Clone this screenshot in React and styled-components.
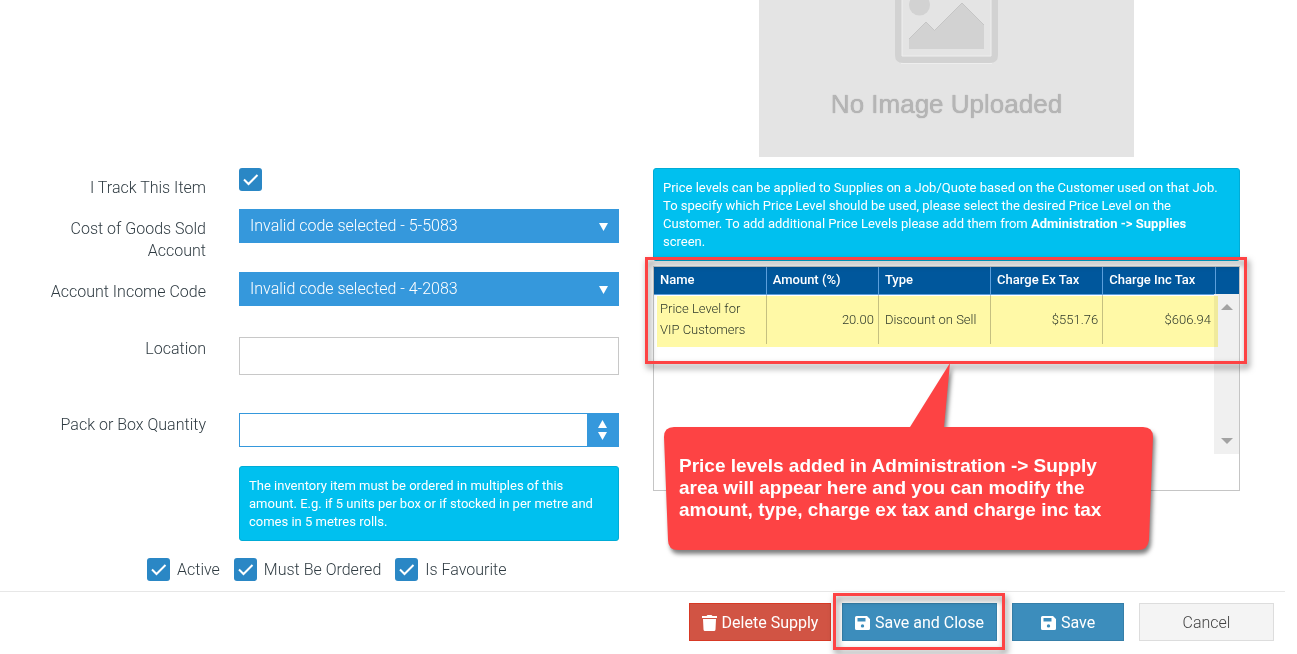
import styled, { createGlobalStyle, css } from 'styled-components'

const GlobalStyle = createGlobalStyle`
  * {
    box-sizing: border-box;
  }
  body {
    margin: 0;
    background: #fff;
    color: #2f3b42;
    font-family: Roboto, "Liberation Sans", sans-serif;
    font-size: 16px;
    font-weight: 300;
    line-height: 22px;
  }
  button, input, select {
    font: inherit;
  }
`
const Main = styled.main`
  display: grid;
  grid-template-columns: minmax(0, 619fr) minmax(0, 587fr);
  column-gap: 34px;
  padding: 0 57px 10px 0;
`
const FormColumn = styled.div`
  padding-top: 168px;
`
const Row = styled.div`
  display: grid;
  grid-template-columns: minmax(0, 206fr) minmax(0, 380fr);
  column-gap: 33px;
  margin-bottom: ${({ $space }) => $space ?? 10}px;
`
const Label = styled.label`
  padding: 9px 0 0 40px;
  text-align: right;
`
const Control = styled.div`
  padding-top: ${({ $low }) => ($low ? 8 : 0)}px;
`
const CheckWrap = styled.span`
  position: relative;
  display: block;
  width: 23px;
  height: 23px;
  svg {
    position: absolute;
    inset: 0;
    pointer-events: none;
  }
`
const CheckInput = styled.input`
  appearance: none;
  display: block;
  width: 23px;
  height: 23px;
  margin: 0;
  border-radius: 3px;
  background: #2a87c5;
`
const SelectWrap = styled.div`
  position: relative;
  svg {
    position: absolute;
    right: 11px;
    top: 14px;
    pointer-events: none;
  }
`
const Select = styled.select`
  appearance: none;
  display: block;
  width: 100%;
  height: 34px;
  padding: 0 30px 0 11px;
  border: 0;
  border-radius: 0;
  background: #3598dc;
  color: #fff;
`
const TextInput = styled.input`
  display: block;
  width: 100%;
  height: 38px;
  padding: 0 10px;
  border: 1px solid #c8c8c8;
`
const NumberBox = styled.div`
  display: flex;
  height: 34px;
  border: 1px solid #3598dc;
`
const NumberInput = styled.input`
  flex: 1;
  min-width: 0;
  padding: 0 10px;
  border: 0;
`
const Spinner = styled.div`
  display: flex;
  flex-direction: column;
  width: 31px;
  background: #3598dc;
`
const SpinButton = styled.button`
  display: flex;
  flex: 1;
  align-items: ${({ $down }) => ($down ? 'flex-start' : 'flex-end')};
  justify-content: center;
  padding: 2px 0;
  border: 0;
  background: none;
`
const Info = styled.p`
  margin: 0;
  padding: 10px 9px 9px;
  border: 1px solid #00acd6;
  border-radius: 3px;
  background: #00c0ef;
  color: #fff;
  font-size: 13px;
  font-weight: 400;
  line-height: 18px;
  white-space: nowrap;
`
const Flags = styled.div`
  display: flex;
  gap: 14px;
  margin: 17px 0 0 147px;
  line-height: 23px;
`
const Flag = styled.label`
  display: flex;
  gap: 7px;
`

const PriceColumn = styled.div`
  position: relative;
`
const ImageBox = styled.div`
  display: flex;
  flex-direction: column;
  align-items: center;
  width: 375px;
  max-width: 100%;
  height: 157px;
  margin: 0 auto 11px;
  background: #e4e4e4;
  color: #b5b5b5;
  font-family: "Liberation Sans", Arial, sans-serif;
  font-size: 26px;
  font-weight: 400;
  line-height: 30px;
  text-shadow: 0 0 1px #999;
  svg {
    margin-bottom: 24px;
  }
`
const Grid = styled.div`
  position: relative;
  height: 225px;
  margin-top: 5px;
  border: 1px solid #c5c5c5;
`
const Table = styled.table`
  width: 100%;
  border-collapse: collapse;
  table-layout: fixed;
  font-size: 13px;
`
const Th = styled.th`
  height: 27px;
  padding: 0 6px;
  border-right: 1px solid #5c9fdc;
  border-bottom: 1px solid #5c9fdc;
  background: #00579c;
  color: #fff;
  font-weight: 500;
  line-height: 20px;
  text-align: left;
  white-space: nowrap;
  &:last-child {
    width: 24px;
    border-right: 0;
  }
`
const Td = styled.td`
  height: 50px;
  padding: 0 4px 0 6px;
  border-right: 1px solid #c5c5c5;
  line-height: 21px;
  text-align: ${({ $number }) => ($number ? 'right' : 'left')};
  &:nth-last-child(-n + 2) {
    border-right: 0;
  }
`
const ScrollTrack = styled.div`
  position: absolute;
  top: 27px;
  right: 0;
  display: flex;
  flex-direction: column;
  justify-content: space-between;
  align-items: center;
  width: 25px;
  height: 160px;
  padding: 10px 0;
  background: #f0f0f0;
`
const Highlight = styled.div`
  position: absolute;
  top: 29px;
  left: 3px;
  right: 21px;
  height: 51px;
  background: #fff9a6;
  mix-blend-mode: multiply;
`
const frame = css`
  position: absolute;
  border: 3px solid #fd4344;
  filter: drop-shadow(2px 4px 3px rgba(0, 0, 0, 0.5));
  pointer-events: none;
`
const GridFrame = styled.div`
  ${frame}
  top: -10px;
  left: -9px;
  right: -8px;
  height: 107px;
`
const Callout = styled.div`
  position: absolute;
  top: 363px;
  left: 11px;
  width: 490px;
  padding: 92px 0 0 15px;
  color: #fff;
  font-family: "Liberation Sans", Arial, sans-serif;
  font-size: 19px;
  font-weight: 700;
  line-height: 22px;
  white-space: nowrap;
  svg {
    position: absolute;
    top: 0;
    left: 0;
    overflow: visible;
    filter: drop-shadow(2px 4px 2px rgba(0, 0, 0, 0.5));
  }
  span {
    position: relative;
  }
`

const Footer = styled.footer`
  display: flex;
  justify-content: flex-end;
  gap: 15px;
  margin-right: 12px;
  padding: 11px 11px 13px 0;
  border-top: 1px solid #e7e7e7;
`
const ButtonPair = styled.div`
  display: flex;
  gap: 11px;
`
const tones = {
  danger: ['#d15444', '#d73925', '#fff'],
  primary: ['#3c8dbc', '#367fa9', '#fff'],
  plain: ['#f4f4f4', '#ddd', '#444'],
}
const Button = styled.button`
  display: flex;
  align-items: center;
  justify-content: center;
  gap: 5px;
  width: ${({ $width }) => $width}px;
  height: 38px;
  padding: 1px 0 0;
  border: 1px solid ${({ $tone }) => tones[$tone][1]};
  background: ${({ $tone }) => tones[$tone][0]};
  color: ${({ $tone }) => tones[$tone][2]};
  font-weight: ${({ $tone }) => ($tone === 'plain' ? 300 : 400)};
  white-space: nowrap;
`
const Framed = styled.div`
  position: relative;
`
const ButtonFrame = styled.div`
  ${frame}
  inset: -10px -8px -9px -9px;
`

const Checkbox = (props) => (
  <CheckWrap>
    <CheckInput type="checkbox" defaultChecked {...props} />
    <svg width="23" height="23" viewBox="0 0 23 23" fill="none" stroke="#fff" strokeWidth="2">
      <path d="M5 11.5L9.5 16L18.5 7" />
    </svg>
  </CheckWrap>
)

const Arrow = ({ up, color = '#fff', width = 9, height = 8 }) => (
  <svg width={width} height={height} viewBox="0 0 10 8" preserveAspectRatio="none" fill={color}>
    <path d={up ? 'M0 8L5 0L10 8Z' : 'M0 0H10L5 8Z'} />
  </svg>
)

const SaveIcon = () => (
  <svg width="15" height="14" viewBox="0 0 15 14">
    <path
      fill="#fff"
      fillRule="evenodd"
      d="M1.5 0H12L15 3V12.5Q15 14 13.500 14H1.5Q0 14 0 12.500V1.500Q0 0 1.500 0ZM2.500 2V5.500H10.500V2ZM7.500 8.200A1.700 1.700 0 1 0 7.500 11.600A1.700 1.700 0 1 0 7.500 8.200Z"
    />
  </svg>
)

const TrashIcon = () => (
  <svg width="15" height="16" viewBox="0 0 15 16" fill="#fff">
    <path d="M0 1H4.5L5.5 0H9.5L10.5 1H15V3H0ZM1 4H14L13.500 14.500Q13.400 16 12 16H3Q1.600 16 1.500 14.500Z" />
  </svg>
)

const levels = [
  { name: 'Price Level for VIP Customers', amount: '20.00', type: 'Discount on Sell', exTax: '$551.76', incTax: '$606.94' },
]

const CodeSelect = ({ id, value }) => (
  <SelectWrap>
    <Select id={id} defaultValue={value}>
      <option value={value}>Invalid code selected - {value}</option>
    </Select>
    <Arrow />
  </SelectWrap>
)

const App = () => (
  <>
    <GlobalStyle />
    <Main>
      <FormColumn>
        <Row>
          <Label htmlFor="track">I Track This Item</Label>
          <Control><Checkbox id="track" /></Control>
        </Row>
        <Row>
          <Label htmlFor="cogs">Cost of Goods Sold Account</Label>
          <Control><CodeSelect id="cogs" value="5-5083" /></Control>
        </Row>
        <Row $space={23}>
          <Label htmlFor="income">Account Income Code</Label>
          <Control><CodeSelect id="income" value="4-2083" /></Control>
        </Row>
        <Row $space={30}>
          <Label htmlFor="location">Location</Label>
          <Control $low><TextInput id="location" type="text" /></Control>
        </Row>
        <Row $space={19}>
          <Label htmlFor="pack">Pack or Box Quantity</Label>
          <Control $low>
            <NumberBox>
              <NumberInput id="pack" type="text" inputMode="numeric" />
              <Spinner>
                <SpinButton type="button" aria-label="Increase"><Arrow up /></SpinButton>
                <SpinButton type="button" aria-label="Decrease" $down><Arrow /></SpinButton>
              </Spinner>
            </NumberBox>
          </Control>
        </Row>
        <Row $space={0}>
          <span />
          <Info>
            The inventory item must be ordered in multiples of this<br />
            amount. E.g. if 5 units per box or if stocked in per metre and<br />
            comes in 5 metres rolls.
          </Info>
        </Row>
        <Flags>
          <Flag><Checkbox />Active</Flag>
          <Flag><Checkbox />Must Be Ordered</Flag>
          <Flag><Checkbox />Is Favourite</Flag>
        </Flags>
      </FormColumn>

      <PriceColumn>
        <ImageBox>
          <svg width="103" height="65" viewBox="0 0 103 65">
            <path d="M0 -10V55Q0 63 8 63H95Q103 63 103 55V-10H96V56H7V-10Z" fill="#d2d2d2" />
            <path d="M7 -10V56H96V-10" fill="none" stroke="#efefef" />
            <path d="M6 63.5H97" stroke="#eee" />
            <circle cx="24.5" cy="5" r="10.5" fill="#d2d2d2" />
            <path d="M14 49V39L31 22L39.5 30.5L67 3L89 25V49Z" fill="#d2d2d2" />
            <path d="M14 39L31 22L39.5 30.5L67 3L89 25" fill="none" stroke="#c5c5c5" />
          </svg>
          No Image Uploaded
        </ImageBox>
        <Info>
          Price levels can be applied to Supplies on a Job/Quote based on the Customer used on that Job.<br />
          To specify which Price Level should be used, please select the desired Price Level on the<br />
          Customer. To add additional Price Levels please add them from <b>Administration -&gt; Supplies</b><br />
          screen.
        </Info>
        <Grid>
          <Table>
            <thead>
              <tr>
                <Th>Name</Th>
                <Th>Amount (%)</Th>
                <Th>Type</Th>
                <Th>Charge Ex Tax</Th>
                <Th>Charge Inc Tax</Th>
                <Th aria-hidden="true" />
              </tr>
            </thead>
            <tbody>
              {levels.map(({ name, amount, type, exTax, incTax }) => (
                <tr key={name}>
                  <Td>{name}</Td>
                  <Td $number>{amount}</Td>
                  <Td>{type}</Td>
                  <Td $number>{exTax}</Td>
                  <Td $number>{incTax}</Td>
                  <Td />
                </tr>
              ))}
            </tbody>
          </Table>
          <ScrollTrack>
            <Arrow up color="#a3a3a3" width={12} height={6} />
            <Arrow color="#a3a3a3" width={12} height={6} />
          </ScrollTrack>
          <Highlight />
          <GridFrame />
        </Grid>
        <Callout>
          <svg width="490" height="188" viewBox="0 0 490 188">
            <path
              fill="#fd4344"
              d="M10 64H246L286 0L280 64H479Q489 64 489 74L485 177Q484 187 474 187H14Q4 187 4 177L0 74Q0 64 10 64Z"
            />
          </svg>
          <span>
            Price levels added in Administration -&gt; Supply<br />
            area will appear here and you can modify the<br />
            amount, type, charge ex tax and charge inc tax
          </span>
        </Callout>
      </PriceColumn>
    </Main>

    <Footer>
      <ButtonPair>
        <Button type="button" $tone="danger" $width={142}><TrashIcon />Delete Supply</Button>
        <Framed>
          <Button type="button" $tone="primary" $width={155}><SaveIcon />Save and Close</Button>
          <ButtonFrame />
        </Framed>
      </ButtonPair>
      <Button type="button" $tone="primary" $width={112}><SaveIcon />Save</Button>
      <Button type="button" $tone="plain" $width={135}>Cancel</Button>
    </Footer>
  </>
)
export default App
